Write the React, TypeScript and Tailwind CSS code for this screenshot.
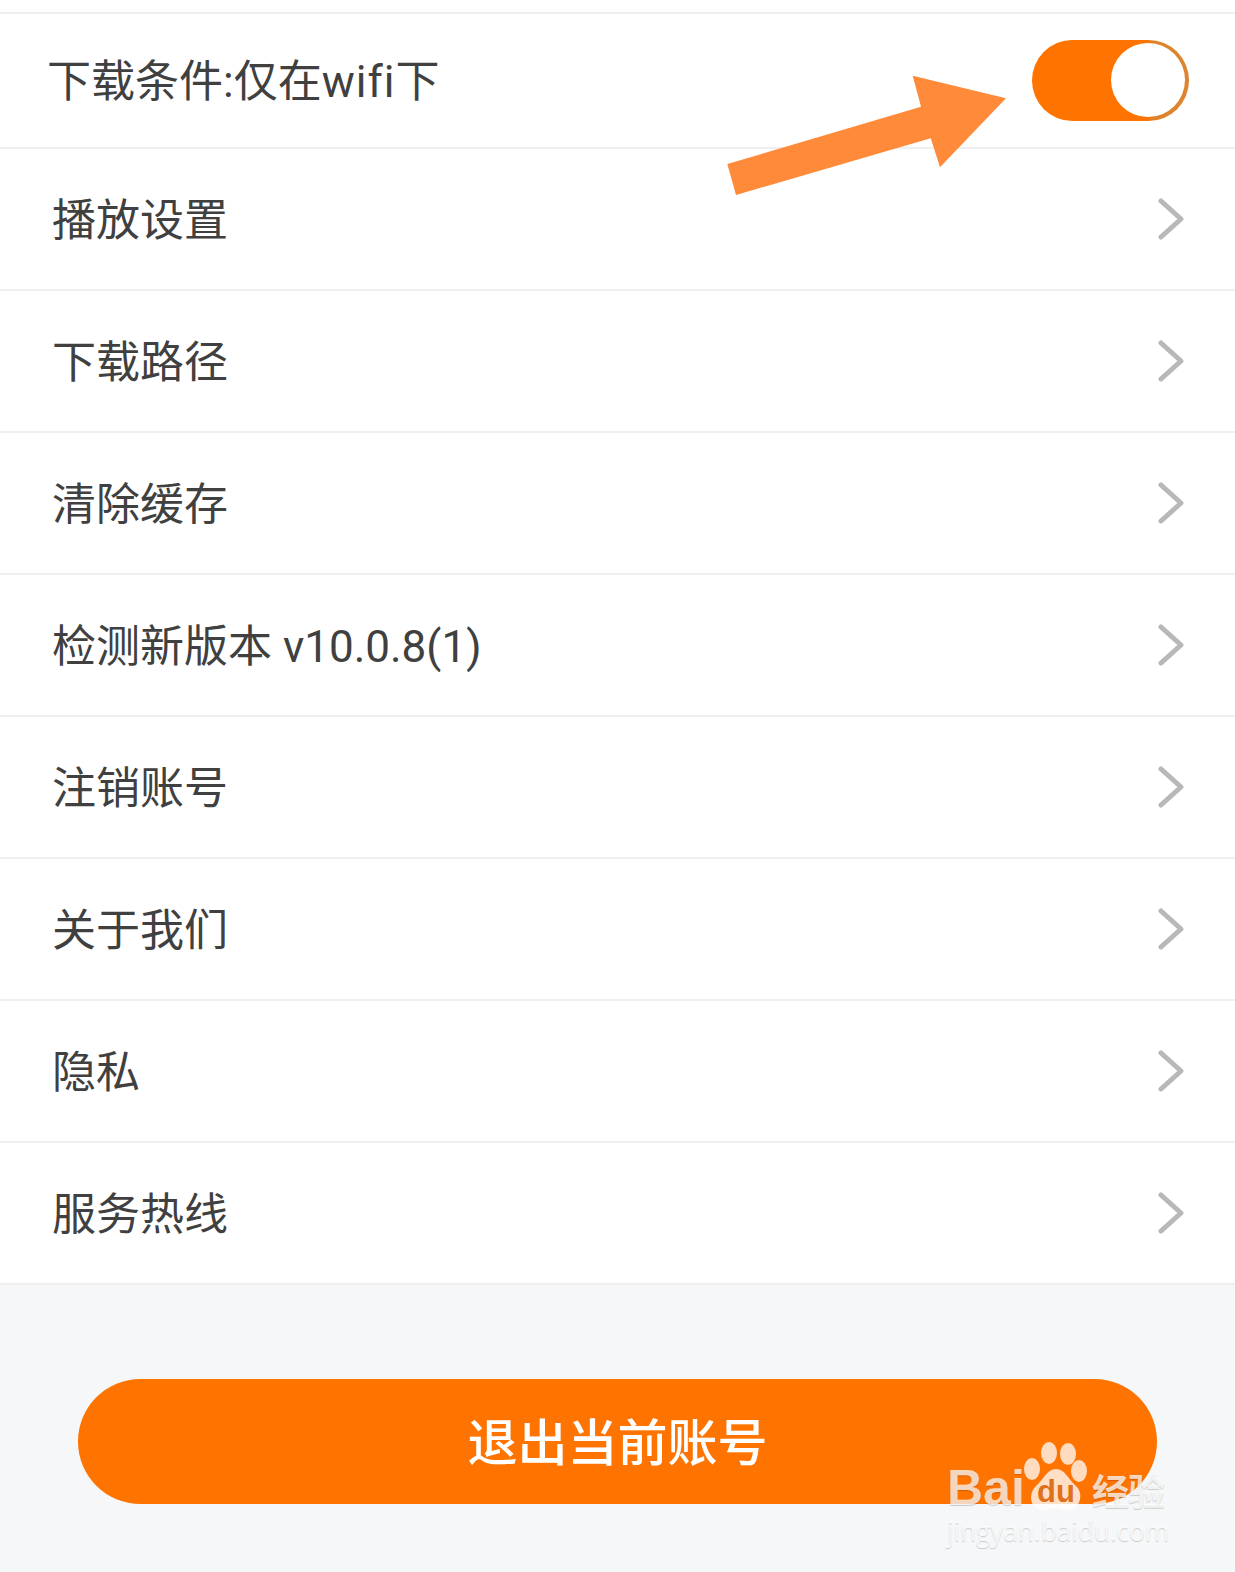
const rows = ['播放设置', '下载路径', '清除缓存', '检测新版本 v10.0.8(1)', '注销账号', '关于我们', '隐私', '服务热线']

function Chevron() {
  return (
    <svg width="26" height="42" viewBox="0 0 26 42" fill="none" className="shrink-0">
      <path d="M3 3 L23 21 L3 39" stroke="#b8b8b8" strokeWidth="5" strokeLinecap="round" strokeLinejoin="round" />
    </svg>
  )
}

function Toggle() {
  return (
    <div className="flex h-[81px] w-[157px] items-center justify-end rounded-full bg-[linear-gradient(90deg,#ff7300_72%,#dc842e_78%)] pr-[4px]">
      <div className="h-[74px] w-[74px] rounded-full bg-white" />
    </div>
  )
}

function Arrow() {
  return (
    <svg width="290" height="135" viewBox="0 0 290 135" className="absolute left-[722px] top-[72px]">
      <polygon points="5.3,92 14,123 208.7,66.3 218,95.3 284,26.3 190.7,3.7 199,34.7" fill="#ff8a3a" />
    </svg>
  )
}

function Watermark() {
  return (
    <div className="absolute left-[947px] top-[1441px] flex w-[225px] flex-col text-white/75 [text-shadow:0_1px_1px_rgba(0,0,0,0.18)]">
      <div className="flex h-[70px] items-end">
        <span className="mb-[-5px] w-[76px] font-['Liberation_Sans',sans-serif] text-[50px] font-bold leading-[56px]">Bai</span>
        <div className="relative h-[70px] w-[66px]">
          <svg width="66" height="70" viewBox="0 0 66 70">
            <ellipse cx="26" cy="12" rx="8" ry="11" fill="#ffffff" fillOpacity="0.75" />
            <ellipse cx="45" cy="13" rx="8" ry="11" fill="#ffffff" fillOpacity="0.75" />
            <ellipse cx="9" cy="28" rx="8" ry="11" fill="#ffffff" fillOpacity="0.75" />
            <ellipse cx="56" cy="30" rx="8" ry="11" fill="#ffffff" fillOpacity="0.75" />
            <path d="M33 28 C42 28 45 38 53 45 C62 54 56 69 44 69 C38 69 36 67 33 67 C29 67 27 69 20 69 C8 69 4 54 13 45 C21 38 24 28 33 28Z" fill="#ffffff" fillOpacity="0.78" />
          </svg>
          <span className="absolute inset-x-0 bottom-[3px] text-center font-['Liberation_Sans',sans-serif] text-[31px] font-bold leading-[32px] text-[#e0701c] [text-shadow:none]">du</span>
        </div>
        <span className="mb-[-3px] ml-[3px] font-['Noto_Sans_CJK_SC',sans-serif] text-[37px] font-bold leading-[48px] tracking-[-1px]">经验</span>
      </div>
      <span className="mt-[4px] whitespace-nowrap font-['Open_Sans',sans-serif] text-[26.5px] leading-[32px] tracking-[-0.2px] text-white/80">jingyan.baidu.com</span>
    </div>
  )
}

export default function App() {
  return (
    <div className="relative h-[1572px] w-[1235px] overflow-hidden bg-[#f6f7f9] font-['Roboto','Noto_Sans_CJK_SC',sans-serif] text-[#404040]">
      {/* settings list */}
      <div className="bg-white">
        <div className="h-[14px] border-b-2 border-[#efefef]" />
        <div className="flex h-[135px] items-center justify-between border-b-2 border-[#efefef] pb-[1px] pl-[47px] pr-[46px]">
          <span className="pt-[4px] text-[44px] leading-none">
            下载条件:仅在<span className="tracking-[1px]">wifi</span>下
          </span>
          <Toggle />
        </div>
        {rows.map((label) => (
          <div key={label} className="flex h-[142px] items-center justify-between border-b-2 border-[#efefef] pl-[52px] pr-[51px]">
            <span className="pt-[4px] text-[44px] leading-none">{label}</span>
            <Chevron />
          </div>
        ))}
      </div>

      {/* logout */}
      <div className="px-[78px] pt-[94px]">
        <button className="flex h-[125px] w-full items-center justify-center rounded-full bg-[#ff7300] pt-[5px] text-[50px] font-medium leading-none text-white">
          退出当前账号
        </button>
      </div>

      <Arrow />
      <Watermark />
    </div>
  )
}
